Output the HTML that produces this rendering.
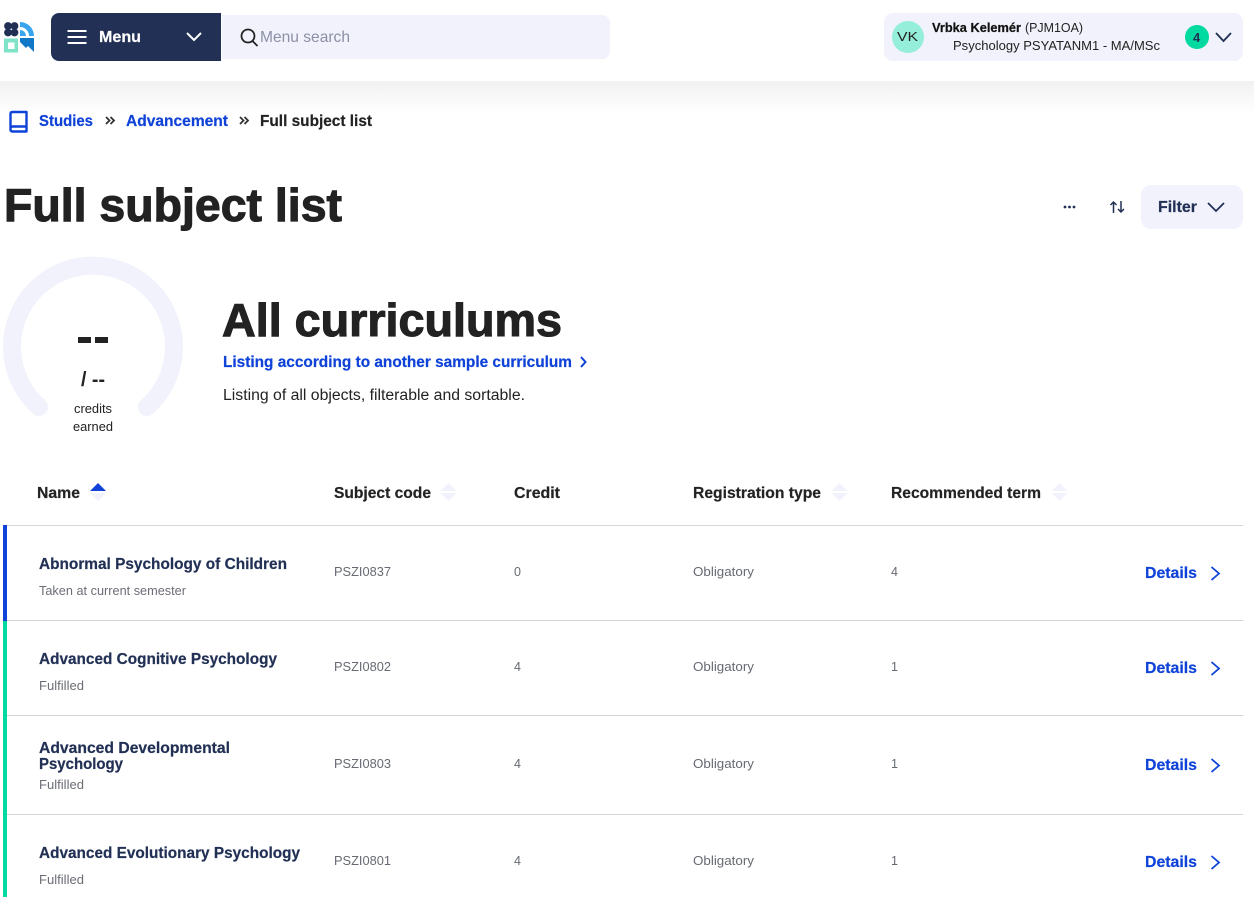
<!DOCTYPE html>
<html lang="en">
<head>
<meta charset="utf-8">
<title>Full subject list</title>
<style>
html,body{margin:0;padding:0;background:#fff;width:1254px;height:897px;overflow:hidden}
svg{display:block;position:absolute;left:0;top:0}
text{font-family:"Liberation Sans",sans-serif;white-space:pre}
.b{font-weight:700}
.lnk{font-weight:700;font-size:15.5px;fill:#0f43d8;stroke:#0f43d8;stroke-width:.2px}
.th{font-weight:700;font-size:15.5px;fill:#232323;stroke:#232323;stroke-width:.2px}
.nm{font-weight:700;font-size:15.5px;fill:#213054;stroke:#213054;stroke-width:.2px}
.sub{font-size:12.5px;fill:#6b6e75}
.cell{font-size:12.5px;fill:#666a72}
.h1{font-weight:700;font-size:46px;fill:#222;stroke:#222;stroke-width:1.1px}
</style>
</head>
<body>
<svg width="1254" height="897" viewBox="0 0 1254 897" xmlns="http://www.w3.org/2000/svg">
<defs>
<linearGradient id="sh" x1="0" y1="0" x2="0" y2="1"><stop offset="0" stop-color="#f1f1f1"/><stop offset="1" stop-color="#fff"/></linearGradient>
</defs>
<rect x="0" y="81" width="1254" height="32" fill="url(#sh)"/>

<!-- logo -->
<g>
<circle cx="8" cy="26" r="3.900" fill="#213054"/><circle cx="14.500" cy="26" r="3.900" fill="#213054"/>
<circle cx="8" cy="32.500" r="3.900" fill="#213054"/><circle cx="14.500" cy="32.500" r="3.900" fill="#213054"/>
<path d="M20 22A14 14 0 0 1 34 36H29A9 9 0 0 0 20 27Z" fill="#3aa5ef"/>
<path d="M20 30A6 6 0 0 1 26 36H20Z" fill="#3aa5ef"/>
<rect x="4" y="38.500" width="14" height="14" fill="#7fe3c8"/><rect x="8" y="42.500" width="6.500" height="6.500" fill="#fff"/>
<path d="M20 38H34V52L28 46L26 48L20 42Z" fill="#1178c8"/>
</g>

<!-- menu -->
<path d="M59 13H221V61H59A8 8 0 0 1 51 53V21A8 8 0 0 1 59 13Z" fill="#213054"/>
<path d="M67.500 31H86.500M67.500 37H86.500M67.500 43H86.500" stroke="#fff" stroke-width="2" fill="none"/>
<text x="99" y="42" class="b" font-size="15.500" fill="#fff" stroke="#fff" stroke-width=".2" textLength="42" lengthAdjust="spacingAndGlyphs">Menu</text>
<path d="M187 33L194 40L201 33" stroke="#fff" stroke-width="2" fill="none"/>
<path d="M224 15H602A8 8 0 0 1 610 23V51A8 8 0 0 1 602 59H224A2 2 0 0 1 222 57V17A2 2 0 0 1 224 15Z" fill="#f1f2fb"/>
<circle cx="248" cy="36" r="6.500" stroke="#222" stroke-width="1.800" fill="none"/>
<path d="M252.500 41L257.500 46" stroke="#222" stroke-width="1.800"/>
<text x="260" y="42" font-size="16" fill="#8c90a5" textLength="90" lengthAdjust="spacingAndGlyphs">Menu search</text>

<!-- user -->
<rect x="884" y="13" width="359" height="48" rx="9" fill="#f1f2fb"/>
<circle cx="908" cy="37" r="16" fill="#94eeda"/>
<text x="897" y="41" font-size="13" fill="#222" textLength="21" lengthAdjust="spacingAndGlyphs">VK</text>
<text x="932" y="32" class="b" font-size="12.500" fill="#111" stroke="#111" stroke-width=".2" textLength="89" lengthAdjust="spacingAndGlyphs">Vrbka Kelemér</text>
<text x="1025" y="32" font-size="12.500" fill="#222" textLength="58" lengthAdjust="spacingAndGlyphs">(PJM1OA)</text>
<text x="953" y="50" font-size="13" fill="#222" textLength="207" lengthAdjust="spacingAndGlyphs">Psychology PSYATANM1 - MA/MSc</text>
<circle cx="1197" cy="37" r="12" fill="#00d9a0"/>
<text x="1193" y="42" class="b" font-size="13" fill="#213054">4</text>
<path d="M1216 33L1223.500 41L1231 33" stroke="#213054" stroke-width="1.800" fill="none"/>

<!-- breadcrumb -->
<path d="M18 112H12.500Q10.500 112 10.500 114V129.500Q10.500 131.500 12.500 131.500H26.500V112ZM10.500 128.500Q10.500 126.500 12.500 126.500H26.500" stroke="#0f43d8" stroke-width="2.400" fill="none" stroke-linejoin="round"/>
<text x="39" y="126" class="lnk" textLength="54" lengthAdjust="spacingAndGlyphs">Studies</text>
<path d="M106 117L109.500 120.500L106 124M110.500 117L114 120.500L110.500 124" stroke="#333" stroke-width="1.800" fill="none"/>
<text x="126" y="126" class="lnk" textLength="102" lengthAdjust="spacingAndGlyphs">Advancement</text>
<path d="M240 117L243.500 120.500L240 124M244.500 117L248 120.500L244.500 124" stroke="#333" stroke-width="1.800" fill="none"/>
<text x="260" y="126" class="b" font-size="15.500" fill="#222" stroke="#222" stroke-width=".2" textLength="112" lengthAdjust="spacingAndGlyphs">Full subject list</text>

<!-- title row -->
<text x="4" y="221" class="h1" textLength="338" lengthAdjust="spacingAndGlyphs">Full subject list</text>
<circle cx="1065" cy="207" r="1.400" fill="#213054"/><circle cx="1069.500" cy="207" r="1.400" fill="#213054"/><circle cx="1074" cy="207" r="1.400" fill="#213054"/>
<path d="M1113.500 213V202M1110.500 205L1113.500 202L1116.500 205M1121 201V212M1118 209L1121 212L1124 209" stroke="#213054" stroke-width="1.500" fill="none"/>
<rect x="1141" y="185" width="102" height="44" rx="10" fill="#f1f2fb"/>
<text x="1158" y="212" class="b" font-size="15.500" fill="#213054" stroke="#213054" stroke-width=".2" textLength="39" lengthAdjust="spacingAndGlyphs">Filter</text>
<path d="M1208 203L1216 211L1224 203" stroke="#213054" stroke-width="1.800" fill="none"/>

<!-- gauge -->
<path d="M39 407A81 81 0 1 1 147 407" stroke="#f1f2fb" stroke-width="18" stroke-linecap="round" fill="none"/>
<rect x="78" y="337" width="13" height="6" fill="#222"/><rect x="95" y="337" width="13" height="6" fill="#222"/>
<text x="81" y="386" class="b" font-size="20" fill="#222" textLength="24" lengthAdjust="spacingAndGlyphs">/ --</text>
<text x="74" y="413" font-size="12.500" fill="#222" textLength="38" lengthAdjust="spacingAndGlyphs">credits</text>
<text x="73" y="431" font-size="12.500" fill="#222" textLength="40" lengthAdjust="spacingAndGlyphs">earned</text>

<!-- heading -->
<text x="222" y="336" class="h1" textLength="340" lengthAdjust="spacingAndGlyphs">All curriculums</text>
<text x="223" y="367" class="lnk" textLength="349" lengthAdjust="spacingAndGlyphs">Listing according to another sample curriculum</text>
<path d="M581 357L585.500 362L581 367" stroke="#0f43d8" stroke-width="2" fill="none"/>
<text x="223" y="400" font-size="15.500" fill="#222" textLength="302" lengthAdjust="spacingAndGlyphs">Listing of all objects, filterable and sortable.</text>

<!-- table header -->
<text x="37" y="498" class="th" textLength="43" lengthAdjust="spacingAndGlyphs">Name</text>
<path d="M98 483L106 491H90Z" fill="#0f43d8"/><path d="M90 493H106L98 501Z" fill="#f1f2fb"/>
<text x="334" y="498" class="th" textLength="97" lengthAdjust="spacingAndGlyphs">Subject code</text>
<path d="M448.500 483L456.500 491H440.500Z" fill="#f1f2fb"/><path d="M440.500 493H456.500L448.500 501Z" fill="#f1f2fb"/>
<text x="514" y="498" class="th" textLength="46" lengthAdjust="spacingAndGlyphs">Credit</text>
<text x="693" y="498" class="th" textLength="128" lengthAdjust="spacingAndGlyphs">Registration type</text>
<path d="M839.500 483L847.500 491H831.500Z" fill="#f1f2fb"/><path d="M831.500 493H847.500L839.500 501Z" fill="#f1f2fb"/>
<text x="891" y="498" class="th" textLength="150" lengthAdjust="spacingAndGlyphs">Recommended term</text>
<path d="M1059.500 483L1067.500 491H1051.500Z" fill="#f1f2fb"/><path d="M1051.500 493H1067.500L1059.500 501Z" fill="#f1f2fb"/>

<!-- lines and status bars -->
<rect x="3" y="525" width="1240" height="1" fill="#d6d6d6"/>
<rect x="3" y="620" width="1240" height="1" fill="#d6d6d6"/>
<rect x="3" y="715" width="1240" height="1" fill="#d6d6d6"/>
<rect x="3" y="814" width="1240" height="1" fill="#d6d6d6"/>
<rect x="3" y="525" width="4" height="96" fill="#0f43d8"/>
<rect x="3" y="621" width="4" height="276" fill="#00d9a0"/>

<!-- row 1 -->
<text x="39" y="569" class="nm" textLength="248" lengthAdjust="spacingAndGlyphs">Abnormal Psychology of Children</text>
<text x="39" y="595" class="sub" textLength="147" lengthAdjust="spacingAndGlyphs">Taken at current semester</text>
<text x="334" y="576" class="cell" textLength="57" lengthAdjust="spacingAndGlyphs">PSZI0837</text>
<text x="514" y="576" class="cell">0</text>
<text x="693" y="576" class="cell" textLength="61" lengthAdjust="spacingAndGlyphs">Obligatory</text>
<text x="891" y="576" class="cell">4</text>
<text x="1145" y="578" class="lnk" textLength="52" lengthAdjust="spacingAndGlyphs">Details</text>
<path d="M1211.500 567L1219 573.500L1211.500 580" stroke="#0f43d8" stroke-width="1.800" fill="none"/>

<!-- row 2 -->
<text x="39" y="664" class="nm" textLength="238" lengthAdjust="spacingAndGlyphs">Advanced Cognitive Psychology</text>
<text x="39" y="690" class="sub" textLength="45" lengthAdjust="spacingAndGlyphs">Fulfilled</text>
<text x="334" y="671" class="cell" textLength="57" lengthAdjust="spacingAndGlyphs">PSZI0802</text>
<text x="514" y="671" class="cell">4</text>
<text x="693" y="671" class="cell" textLength="61" lengthAdjust="spacingAndGlyphs">Obligatory</text>
<text x="891" y="671" class="cell">1</text>
<text x="1145" y="673" class="lnk" textLength="52" lengthAdjust="spacingAndGlyphs">Details</text>
<path d="M1211.500 662L1219 668.500L1211.500 675" stroke="#0f43d8" stroke-width="1.800" fill="none"/>

<!-- row 3 -->
<text x="39" y="753" class="nm" textLength="191" lengthAdjust="spacingAndGlyphs">Advanced Developmental</text>
<text x="39" y="769" class="nm" textLength="84" lengthAdjust="spacingAndGlyphs">Psychology</text>
<text x="39" y="789" class="sub" textLength="45" lengthAdjust="spacingAndGlyphs">Fulfilled</text>
<text x="334" y="768" class="cell" textLength="57" lengthAdjust="spacingAndGlyphs">PSZI0803</text>
<text x="514" y="768" class="cell">4</text>
<text x="693" y="768" class="cell" textLength="61" lengthAdjust="spacingAndGlyphs">Obligatory</text>
<text x="891" y="768" class="cell">1</text>
<text x="1145" y="770" class="lnk" textLength="52" lengthAdjust="spacingAndGlyphs">Details</text>
<path d="M1211.500 759L1219 765.500L1211.500 772" stroke="#0f43d8" stroke-width="1.800" fill="none"/>

<!-- row 4 -->
<text x="39" y="858" class="nm" textLength="261" lengthAdjust="spacingAndGlyphs">Advanced Evolutionary Psychology</text>
<text x="39" y="884" class="sub" textLength="45" lengthAdjust="spacingAndGlyphs">Fulfilled</text>
<text x="334" y="865" class="cell" textLength="57" lengthAdjust="spacingAndGlyphs">PSZI0801</text>
<text x="514" y="865" class="cell">4</text>
<text x="693" y="865" class="cell" textLength="61" lengthAdjust="spacingAndGlyphs">Obligatory</text>
<text x="891" y="865" class="cell">1</text>
<text x="1145" y="867" class="lnk" textLength="52" lengthAdjust="spacingAndGlyphs">Details</text>
<path d="M1211.500 856L1219 862.500L1211.500 869" stroke="#0f43d8" stroke-width="1.800" fill="none"/>
</svg>
</body>
</html>
